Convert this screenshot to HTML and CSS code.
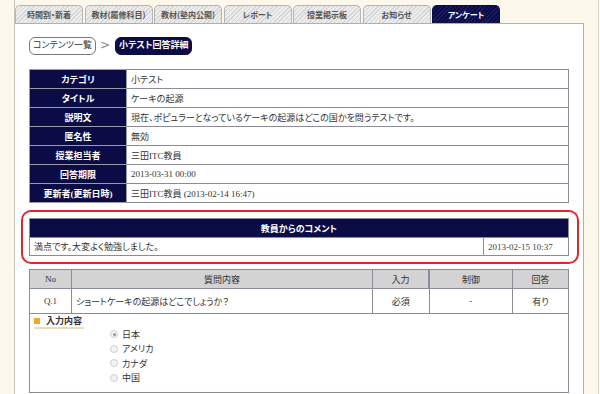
FILE: index.html
```html
<!DOCTYPE html>
<html lang="ja">
<head>
    <meta charset="UTF-8">
    <meta name="viewport" content="width=device-width, initial-scale=1.0">
    <title>小テスト回答詳細</title>
    <link rel="stylesheet" href="styles.css">
</head>
<body>
    <div class="page">
        <div class="frame">
            <ul class="tabs">
                <li>時間割・新着</li>
                <li>教材(履修科目)</li>
                <li>教材(塾内公開)</li>
                <li>レポート</li>
                <li>授業掲示板</li>
                <li>お知らせ</li>
                <li class="active">アンケート</li>
            </ul>

            <div class="panel">
                <div class="crumbs">
                    <span class="crumb">コンテンツ一覧</span>
                    <span class="sep">&gt;</span>
                    <span class="crumb current">小テスト回答詳細</span>
                </div>

                <table class="info">
                    <tr><th>カテゴリ</th><td>小テスト</td></tr>
                    <tr><th>タイトル</th><td>ケーキの起源</td></tr>
                    <tr><th>説明文</th><td>現在、ポピュラーとなっているケーキの起源はどこの国かを問うテストです。</td></tr>
                    <tr><th>匿名性</th><td>無効</td></tr>
                    <tr><th>授業担当者</th><td>三田ITC教員</td></tr>
                    <tr><th>回答期限</th><td>2013-03-31 00:00</td></tr>
                    <tr><th>更新者(更新日時)</th><td>三田ITC教員 (2013-02-14 16:47)</td></tr>
                </table>

                <div class="highlight">
                    <table class="comment">
                        <tr><th colspan="2">教員からのコメント</th></tr>
                        <tr>
                            <td>満点です。大変よく勉強しました。</td>
                            <td class="date">2013-02-15 10:37</td>
                        </tr>
                    </table>
                </div>

                <table class="questions">
                    <tr>
                        <th class="col-no">No</th>
                        <th>質問内容</th>
                        <th class="col-input">入力</th>
                        <th class="col-ctrl">制御</th>
                        <th class="col-answer">回答</th>
                    </tr>
                    <tr>
                        <td class="center">Q.1</td>
                        <td>ショートケーキの起源はどこでしょうか？</td>
                        <td class="center">必須</td>
                        <td class="center">-</td>
                        <td class="center">有り</td>
                    </tr>
                </table>

                <div class="answer">
                    <div class="answer-label"><span class="mark"></span>入力内容</div>
                    <ul class="options">
                        <li><span class="radio checked"></span>日本</li>
                        <li><span class="radio"></span>アメリカ</li>
                        <li><span class="radio"></span>カナダ</li>
                        <li><span class="radio"></span>中国</li>
                    </ul>
                </div>
            </div>
        </div>
    </div>
</body>
</html>
```

FILE: styles.css
```css
html {
    overflow: hidden;
}
body {
    margin: 0;
    background-color: #fdf8ec;
    font-family: "Liberation Serif", "Noto Sans CJK JP", serif;
    font-size: 9px;
    color: #333;
    font-feature-settings: "palt";
}
.page {
    width: 598px;
    border-right: 1px solid #dcd8cc;
    min-height: 420px;
}
.frame {
    margin-left: 14px;
    border-left: 1px solid #c8c6c0;
    min-height: 420px;
}
.tabs {
    display: flex;
    list-style: none;
    margin: 0;
    padding: 4px 0 0 0;
}
.tabs li {
    width: 68px;
    height: 18px;
    margin-right: 1.5px;
    box-sizing: border-box;
    border: 1px solid #b4b4b4;
    border-bottom: none;
    border-radius: 5px 5px 0 0;
    background: repeating-linear-gradient(-45deg, #d6d6d6 0 1px, #ececec 1px 3px);
    color: #555;
    font-family: "Noto Sans CJK JP", sans-serif;
    font-weight: bold;
    font-size: 8px;
    line-height: 18px;
    text-align: center;
    margin-top: 1px;
}
.tabs li.active {
    background: repeating-linear-gradient(-45deg, #1c1c60 0 1px, #0b0b45 1px 3px);
    border-color: #0b0b45;
    color: #fff;
}
.panel {
    width: 540px;
    padding: 13px 14px 20px 14px;
    background-color: #fff;
    border-top: 1px solid #b0b0b0;
    border-right: 1px solid #b0b0b0;
}
.crumbs {
    display: flex;
    align-items: center;
    height: 18px;
}
.crumb {
    height: 18px;
    box-sizing: border-box;
    border: 1px solid #777;
    border-radius: 6px;
    padding: 0 3px;
    line-height: 15px;
    background: #fff;
    color: #333;
}
.crumb.current {
    background-color: #0b0b45;
    border-color: #0b0b45;
    color: #fff;
    font-weight: bold;
}
.sep {
    margin: 0 5px 2px 4px;
    color: #888;
    font-family: "DejaVu Sans", sans-serif;
    font-size: 12px;
    line-height: 12px;
}
table {
    width: 540px;
    border-collapse: collapse;
}
th, td {
    border: 1px solid #8c8c98;
    padding: 0 4px;
    font-weight: normal;
}
.info {
    margin-top: 14px;
}
.info tr {
    height: 19px;
}
.info th {
    width: 88px;
    background-color: #0b0b45;
    color: #fff;
    font-weight: bold;
    border-color: #9a9aa8;
}
.highlight {
    margin: 7px -10px 0 -8px;
    border: 2px solid #e2262b;
    border-radius: 10px;
    padding: 6px 8px 6px 6px;
}
.comment tr {
    height: 18px;
}
.comment th {
    height: 18px;
    background-color: #0b0b45;
    color: #fff;
    font-weight: bold;
}
.comment .date {
    width: 76px;
    color: #444;
}
.questions {
    margin-top: 5px;
}
.questions th {
    height: 18px;
    background-color: #d3d3d3;
    color: #333;
}
.questions tr + tr {
    height: 25px;
}
.col-no { width: 33px; }
.col-input { width: 47px; }
.col-ctrl { width: 74px; border-left-width: 2px; }
.col-answer { width: 47px; }
.center {
    text-align: center;
}
.answer {
    box-sizing: border-box;
    height: 79px;
    border: 1px solid #8c8c98;
    border-top: none;
    padding: 2px 4px 0 4px;
}
.answer-label {
    display: inline-flex;
    align-items: center;
    gap: 6px;
    height: 10px;
    line-height: 10px;
    padding: 0 2px 1px 0;
    border-bottom: 2px solid #eadcb8;
    font-weight: bold;
    color: #333;
}
.mark {
    width: 6px;
    height: 6px;
    background-color: #f2a52a;
}
.options {
    list-style: none;
    margin: -2px 0 0 0;
    padding: 0 0 0 76px;
}
.options li {
    display: flex;
    align-items: center;
    height: 14.5px;
    gap: 4px;
}
.radio {
    width: 6px;
    height: 6px;
    border: 1px solid #cfcfcf;
    border-radius: 50%;
    background-color: #f3f3f3;
    position: relative;
}
.radio.checked::after {
    content: "";
    position: absolute;
    left: 1.5px;
    top: 1.5px;
    width: 3px;
    height: 3px;
    border-radius: 50%;
    background-color: #9a9a9a;
}
```
